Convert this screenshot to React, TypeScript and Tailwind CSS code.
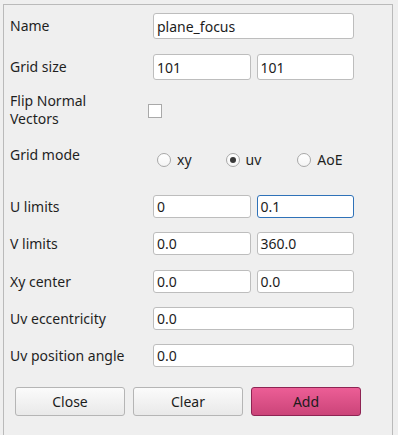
const font = { fontFamily: '"Noto Sans", "DejaVu Sans", sans-serif' }

function Field({ value, focused }: { value: string; focused?: boolean }) {
  return (
    <div
      className={
        'flex h-full min-w-0 flex-1 items-center rounded-[3px] border bg-white pl-[3px] text-[14px] text-[#1c1c1c] ' +
        (focused ? 'border-[#2f72b8]' : 'border-[#bdbdbd]')
      }
    >
      {value}
    </div>
  )
}

function Row({
  label,
  className,
  children,
}: {
  label: string
  className: string
  children: React.ReactNode
}) {
  return (
    <div className={'flex items-center ' + className}>
      <div className="w-[149px] pl-[6px] text-[14px] leading-[18px] text-[#1f1f1f]">{label}</div>
      <div className="flex h-full w-[201px] gap-[6px]">{children}</div>
    </div>
  )
}

function Radio({ label, checked }: { label: string; checked?: boolean }) {
  return (
    <div className="flex items-center">
      <div className="flex h-[14px] w-[14px] items-center justify-center rounded-full border border-[#a8a8a8] bg-gradient-to-b from-white to-[#f4f4f4]">
        {checked && <div className="h-[6px] w-[6px] rounded-full bg-[#383838]" />}
      </div>
      <span className="ml-[6px] text-[14px] leading-[18px] text-[#1f1f1f]">{label}</span>
    </div>
  )
}

function Btn({ label, primary }: { label: string; primary?: boolean }) {
  return (
    <div
      className={
        'flex h-[29px] w-[110px] items-center justify-center rounded-[3px] border text-[14px] text-[#1c1c1c] ' +
        (primary
          ? 'border-[#8e2453] bg-gradient-to-b from-[#ec5e96] to-[#cb4479]'
          : 'border-[#b5b5b5] bg-gradient-to-b from-[#fbfbfb] to-[#e9e9e9]')
      }
    >
      {label}
    </div>
  )
}

export default function App() {
  return (
    <div className="h-[435px] w-[398px] overflow-hidden bg-[#efefef] pl-[3px] pt-[4px]" style={font}>
      <div className="flex h-[440px] w-[390px] flex-col border-l border-r border-t border-[#bababa]">
        <Row label="Name" className="mt-[8px] h-[26px]">
          <Field value="plane_focus" />
        </Row>
        <Row label="Grid size" className="mt-[15px] h-[26px]">
          <Field value="101" />
          <Field value="101" />
        </Row>

        {/* Flip normal vectors */}
        <div className="mt-[12px] flex h-[36px] items-center">
          <div className="w-[144px] pl-[6px] text-[14px] leading-[18px] text-[#1f1f1f]">
            Flip Normal
            <br />
            Vectors
          </div>
          <div className="mt-[1px] h-[14px] w-[14px] border border-[#a9a9a9] bg-white" />
        </div>

        {/* Grid mode */}
        <div className="mt-[10px] flex h-[42px] items-start">
          <div className="mt-[8px] w-[153px] pl-[6px] text-[14px] leading-[18px] text-[#1f1f1f]">Grid mode</div>
          <div className="mt-[13px] flex">
            <Radio label="xy" />
            <div className="ml-[34px]">
              <Radio label="uv" checked />
            </div>
            <div className="ml-[36px]">
              <Radio label="AoE" />
            </div>
          </div>
        </div>

        <Row label="U limits" className="mt-[15px] h-[23px]">
          <Field value="0" />
          <Field value="0.1" focused />
        </Row>
        <Row label="V limits" className="mt-[14px] h-[23px]">
          <Field value="0.0" />
          <Field value="360.0" />
        </Row>
        <Row label="Xy center" className="mt-[15px] h-[23px]">
          <Field value="0.0" />
          <Field value="0.0" />
        </Row>
        <Row label="Uv eccentricity" className="mt-[14px] h-[23px]">
          <Field value="0.0" />
        </Row>
        <Row label="Uv position angle" className="mt-[14px] h-[23px]">
          <Field value="0.0" />
        </Row>

        <div className="mt-[20px] flex gap-[8px] pl-[11px]">
          <Btn label="Close" />
          <Btn label="Clear" />
          <Btn label="Add" primary />
        </div>
      </div>
    </div>
  )
}
